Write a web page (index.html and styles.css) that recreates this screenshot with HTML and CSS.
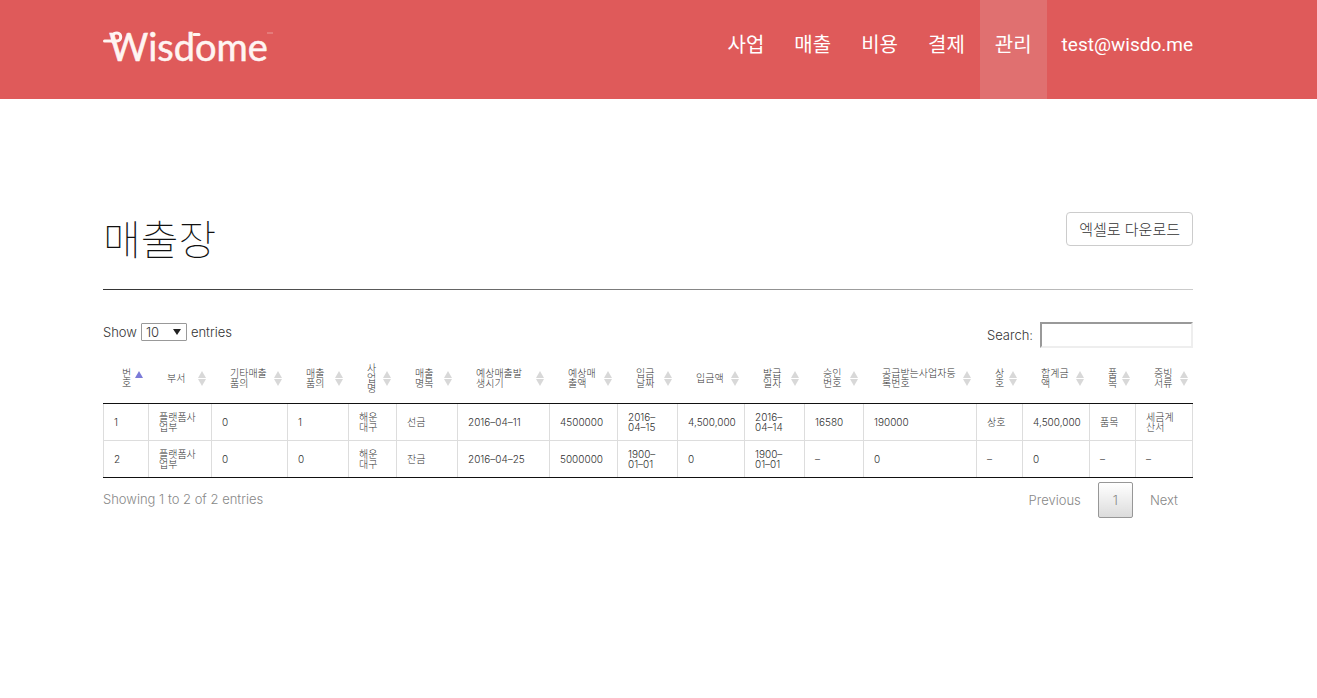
FILE: index.html
```html
<!DOCTYPE html>
<html lang="ko">
<head>
<meta charset="utf-8">
<title>매출장</title>
<link rel="stylesheet" href="styles.css">
</head>
<body>
<header class="topbar">
  <a class="brand" href="#" aria-label="Wisdome">
    <svg class="logo" width="180" height="56" viewBox="0 -10 180 56">
      <text class="logo-text" x="6" y="32">Wisdome</text>
      <path class="logo-line" d="M1.500 12H14c5 0 5-8 0-8-4.500 0-5.500 3.500-4 9"/>
      <path class="logo-line" d="M91 5.500h5"/>
      <path class="logo-mark" d="M164 4h6"/>
    </svg>
  </a>
  <nav class="menu">
    <a href="#">사업</a>
    <a href="#">매출</a>
    <a href="#">비용</a>
    <a href="#">결제</a>
    <a class="active" href="#">관리</a>
    <a class="account" href="#">test@wisdo.me</a>
  </nav>
</header>
<main class="content">
  <div class="heading">
    <h1>매출장</h1>
    <button class="download" type="button">엑셀로 다운로드</button>
  </div>
  <div class="rule"></div>
  <div class="tools">
    <label class="length">Show
      <span class="select-wrap"><select><option>10</option><option>25</option></select></span>
      entries</label>
    <label class="search">Search:<input type="search"></label>
  </div>
  <table class="sales">
    <colgroup>
      <col class="w45"><col class="w63"><col class="w76"><col class="w61"><col class="w48"><col class="w61"><col class="w92"><col class="w68"><col class="w60"><col class="w67"><col class="w60"><col class="w59"><col class="w113"><col class="w46"><col class="w67"><col class="w46"><col class="w58">
    </colgroup>
    <thead>
      <tr>
        <th class="asc">번<br>호</th><th>부서</th><th>기타매출<br>품의</th><th>매출<br>품의</th><th>사<br>업<br>명</th><th>매출<br>명목</th><th>예상매출발<br>생시기</th><th>예상매<br>출액</th><th>입금<br>날짜</th><th>입금액</th><th>발급<br>일자</th><th>승인<br>번호</th><th>공급받는사업자등<br>록번호</th><th>상<br>호</th><th>합계금<br>액</th><th>품<br>목</th><th>증빙<br>서류</th>
      </tr>
    </thead>
    <tbody>
      <tr>
        <td>1</td><td>플랫폼사<br>업부</td><td>0</td><td>1</td><td>해운<br>대구</td><td>선금</td><td>2016–04–11</td><td>4500000</td><td>2016–<br>04–15</td><td>4,500,000</td><td>2016–<br>04–14</td><td>16580</td><td>190000</td><td>상호</td><td>4,500,000</td><td>품목</td><td>세금계<br>산서</td>
      </tr>
      <tr>
        <td>2</td><td>플랫폼사<br>업부</td><td>0</td><td>0</td><td>해운<br>대구</td><td>잔금</td><td>2016–04–25</td><td>5000000</td><td>1900–<br>01–01</td><td>0</td><td>1900–<br>01–01</td><td>–</td><td>0</td><td>–</td><td>0</td><td>–</td><td>–</td>
      </tr>
    </tbody>
  </table>
  <div class="foot">
    <div class="info">Showing 1 to 2 of 2 entries</div>
    <div class="pager">
      <button type="button">Previous</button>
      <button class="current" type="button">1</button>
      <button type="button">Next</button>
    </div>
  </div>
</main>
</body>
</html>
```
FILE: styles.css
```css
* { box-sizing: border-box; }
body {
  margin: 0;
  background: #fff;
  color: #333;
  font-family: Inter, "Noto Sans CJK KR", sans-serif;
  font-weight: 300;
  font-size: 13px;
}
.topbar {
  display: flex;
  justify-content: space-between;
  height: 99px;
  padding: 0 109px 0 103px;
  background: #df5a5a;
}
.brand { padding-top: 19px; }
.logo { display: block; }
.logo-text { font: 400 38px Lato, sans-serif; fill: #fff5f2; stroke: #fff5f2; stroke-width: 0.5; }
.logo-line { fill: none; stroke: #fff5f2; stroke-width: 3; stroke-linecap: round; }
.logo-mark { stroke: #eb9a98; stroke-width: 1; }
.menu { display: flex; }
.menu a {
  padding: 30px 15px 0;
  color: #fff;
  font-family: Roboto, "Noto Sans CJK KR", sans-serif;
  font-size: 20px;
  line-height: 30px;
  font-weight: 400;
  text-decoration: none;
}
.menu .active { background: #e07070; }
.menu .account { font-size: 19px; }
.content { padding: 113px 124px 0 103px; }
.heading { display: flex; justify-content: space-between; align-items: flex-start; height: 77px; }
h1 { margin: 0; font-size: 41px; line-height: 56px; font-weight: 100; color: #111; }
.download {
  height: 34px;
  padding: 0 12px 2px;
  border: 1px solid #ccc;
  border-radius: 4px;
  background: #fff;
  color: #333;
  font: inherit;
  font-size: 15px;
}
.rule { height: 1px; background: linear-gradient(90deg, #333, #ccc); }
.tools { display: flex; justify-content: space-between; align-items: flex-start; padding-top: 32px; height: 63px; }
.length { display: flex; align-items: center; gap: 4px; line-height: 20px; }
.select-wrap { position: relative; display: flex; }
.select-wrap::after {
  content: "";
  position: absolute;
  right: 6px;
  top: 6px;
  border: 4px solid transparent;
  border-top: 6px solid #222;
  border-bottom: 0;
  pointer-events: none;
}
select {
  appearance: none;
  width: 46px;
  height: 18px;
  padding: 0 4px;
  border: 1px solid #999;
  border-radius: 1px;
  background: #fff;
  color: #333;
  font: inherit;
  line-height: 16px;
}
.search { display: flex; align-items: center; gap: 7px; }
.search input {
  width: 153px;
  height: 26px;
  border: 2px solid;
  border-color: #999 #eee #eee #999;
  background: #fff;
  font: inherit;
}
.sales {
  width: 100%;
  table-layout: fixed;
  border-collapse: separate;
  border-spacing: 0;
  border-bottom: 1px solid #111;
  font-size: 10px;
  line-height: 10px;
  white-space: nowrap;
}
.w45 { width: 45px; } .w46 { width: 46px; } .w48 { width: 48px; }
.w58 { width: 58px; } .w59 { width: 59px; } .w60 { width: 60px; }
.w61 { width: 61px; } .w63 { width: 63px; } .w67 { width: 67px; }
.w68 { width: 68px; } .w76 { width: 76px; } .w92 { width: 92px; }
.w113 { width: 113px; }
th {
  position: relative;
  height: 51px;
  padding: 10px 0 10px 19px;
  border-bottom: 1px solid #111;
  font-weight: 300;
  text-align: left;
}
th::before, th::after {
  content: "";
  position: absolute;
  right: 5px;
  border: 4px solid transparent;
}
th::before { top: 18px; border-top: 0; border-bottom: 7px solid #d8d8d8; }
th::after { top: 26px; border-bottom: 0; border-top: 7px solid #d8d8d8; }
.asc::before { border-bottom-color: #7b7bd8; }
.asc::after { display: none; }
td { height: 36px; padding: 8px 0 8px 10px; border-left: 1px solid #ddd; }
td:last-child { border-right: 1px solid #ddd; }
tbody tr + tr td { height: 37px; border-top: 1px solid #ddd; }
.foot { display: flex; justify-content: space-between; padding-top: 4px; color: #888; }
.info { padding-top: 7px; line-height: 20px; }
.pager { display: flex; gap: 2px; }
.pager button {
  height: 36px;
  padding: 0 14px;
  border: 1px solid transparent;
  border-radius: 2px;
  background: none;
  color: #888;
  font: inherit;
}
.pager .current { border-color: #979797; background: linear-gradient(#fff, #dcdcdc); }
```
